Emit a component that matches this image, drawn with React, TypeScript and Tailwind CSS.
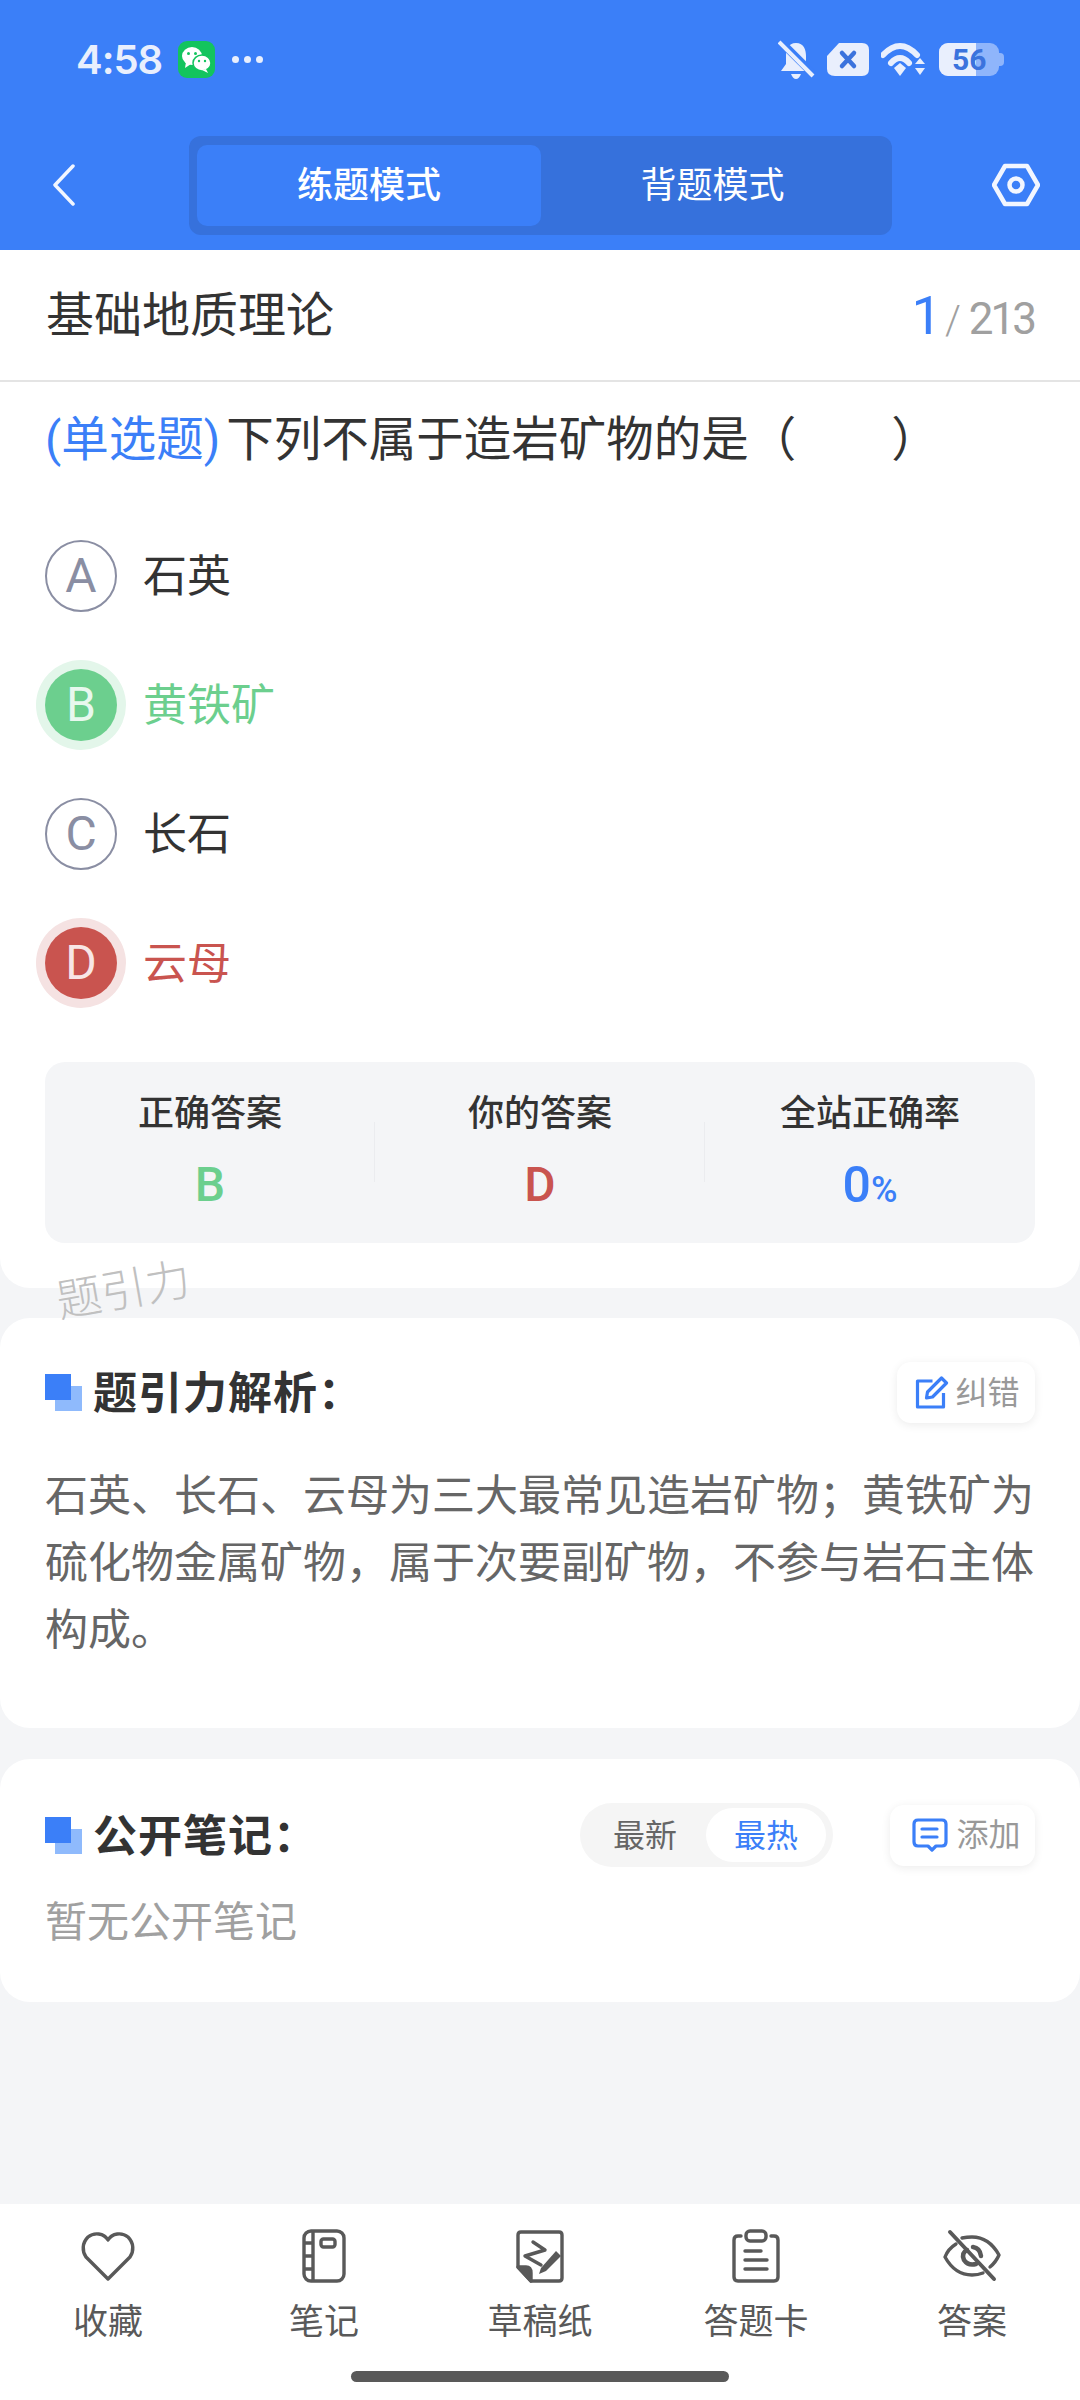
import React from 'react';

const fontStack = "font-['Roboto','Noto_Sans_CJK_SC',sans-serif]";

const HeartIcon = () => (
  <svg width="54" height="54" viewBox="0 0 54 54" fill="none" stroke="#595959" strokeWidth="3.4" strokeLinejoin="round">
    <path d="M27 11 C23 4 13 3 7 8 C1 14 1 22 5 28 L27 50 L49 28 C53 22 53 14 47 8 C41 3 31 4 27 11 Z" />
  </svg>
);

const NotebookIcon = () => (
  <svg width="54" height="54" viewBox="0 0 54 54" fill="none" stroke="#595959" strokeWidth="3.4" strokeLinejoin="round">
    <rect x="7" y="2" width="40" height="50" rx="7" />
    <path d="M16 2 V52 M7 14 H16 M7 27 H16 M7 40 H16" />
    <rect x="24" y="10" width="14" height="8" rx="2.5" />
  </svg>
);

const DraftIcon = () => (
  <svg width="54" height="54" viewBox="0 0 54 54" fill="none" stroke="#595959" strokeWidth="3.4" strokeLinejoin="round" strokeLinecap="round">
    <path d="M5 38 V6 Q5 3 8 3 H46 Q49 3 49 6 V49 Q49 52 46 52 H18 Z" />
    <path d="M5 38 H13 Q18 38 18 44 V52 Z" fill="#595959" />
    <path d="M20 13 L32 21 L12 27 L28 36" />
    <path d="M28 39 L43 22 L48 27 L33 42 L26 45 Z" fill="#595959" stroke="none" />
  </svg>
);

const ClipboardIcon = () => (
  <svg width="54" height="54" viewBox="0 0 54 54" fill="none" stroke="#595959" strokeWidth="3.4" strokeLinecap="round" strokeLinejoin="round">
    <path d="M12 7 H9 Q5 7 5 11 V48 Q5 52 9 52 H45 Q49 52 49 48 V11 Q49 7 45 7 H42" />
    <rect x="17" y="2" width="20" height="10" rx="4" />
    <path d="M16 22 H32 M16 31 H38 M16 40 H38" />
  </svg>
);

const EyeOffIcon = () => (
  <svg width="58" height="54" viewBox="0 0 58 54" fill="none" stroke="#595959" strokeWidth="3.4" strokeLinecap="round" strokeLinejoin="round">
    <path d="M13 15 Q5 20 2 28 Q12 46 29 46 Q35 46 40 44" />
    <path d="M19 9 Q24 8 29 8 Q46 8 56 26 Q53 33 47 38" />
    <path d="M24 21 Q18 24 21 31 Q25 37 33 35" strokeWidth="4.5" />
    <path d="M30 18 Q37 19 38 27" strokeWidth="4.5" />
    <path d="M7 3 L51 50" strokeWidth="4" />
  </svg>
);

const SectionMark = () => (
  <div className="relative w-[37px] h-[37px] shrink-0">
    <div className="absolute left-[10px] top-[12px] w-[27px] h-[25px] bg-[#8fbafc]" />
    <div className="absolute left-0 top-0 w-[26px] h-[26px] bg-[#3b7ff8]" />
  </div>
);

const options = [
  { key: 'A', text: '石英', state: 'plain' },
  { key: 'B', text: '黄铁矿', state: 'right' },
  { key: 'C', text: '长石', state: 'plain' },
  { key: 'D', text: '云母', state: 'wrong' },
];

const tabs = [
  { label: '收藏', icon: <HeartIcon /> },
  { label: '笔记', icon: <NotebookIcon /> },
  { label: '草稿纸', icon: <DraftIcon /> },
  { label: '答题卡', icon: <ClipboardIcon /> },
  { label: '答案', icon: <EyeOffIcon /> },
];

export default function App() {
  return (
    <div className={`relative w-[1080px] h-[2400px] flex flex-col bg-[#f4f5f7] overflow-hidden ${fontStack}`}>
      <header className="h-[250px] bg-[#3b7ff8] flex flex-col shrink-0">
        <div className="h-[136px] pt-[41px] pl-[76px] pr-[76px] flex justify-between items-start">
          <div className="flex items-center h-[37px]">
            <span className="w-[85px] text-[40px] leading-[37px] font-semibold text-[#e9effd] font-['Inter',sans-serif] tracking-[-1px]">4:58</span>
            <div className="ml-[17px] w-[37px] h-[37px] rounded-[9px] bg-[#13c45e] flex items-center justify-center">
              <svg width="31" height="27" viewBox="0 0 31 27" fill="#ffffff">
                <ellipse cx="11" cy="10" rx="10" ry="9" />
                <path d="M5 16 L4 22 L10 18 Z" />
                <ellipse cx="21" cy="17" rx="9" ry="8" stroke="#13c45e" strokeWidth="1.5" />
                <path d="M25 23 L27 27 L21 24 Z" />
                <circle cx="7.5" cy="7.5" r="1.5" fill="#13c45e" />
                <circle cx="14.5" cy="7.5" r="1.5" fill="#13c45e" />
                <circle cx="18" cy="15" r="1.2" fill="#13c45e" />
                <circle cx="24" cy="15" r="1.2" fill="#13c45e" />
              </svg>
            </div>
            <div className="ml-[17px] flex gap-[5px]">
              <span className="w-[7px] h-[7px] rounded-full bg-[#e9effd]" />
              <span className="w-[7px] h-[7px] rounded-full bg-[#e9effd]" />
              <span className="w-[7px] h-[7px] rounded-full bg-[#e9effd]" />
            </div>
          </div>
          <div className="flex items-center gap-[12px] h-[37px]">
            <svg width="37" height="40" viewBox="0 0 37 40" fill="#e9effd">
              <path d="M18 3 C10 3 8 10 8 16 V24 L3 31 H33 L28 24 V16 C28 10 26 3 18 3 Z" />
              <path d="M13 34 H23 Q21 39 18 39 Q15 39 13 34 Z" />
              <path d="M2 1 L36 35" stroke="#3b7ff8" strokeWidth="8" />
              <path d="M1 2 L35 36" stroke="#e9effd" strokeWidth="4" />
            </svg>
            <svg width="42" height="33" viewBox="0 0 42 33">
              <path d="M12 0 H35 Q42 0 42 7 V26 Q42 33 35 33 H8 Q0 33 0 26 V13 Z" fill="#e9effd" />
              <path d="M15 10 L27 23 M27 10 L15 23" stroke="#3b73dd" strokeWidth="4.5" strokeLinecap="round" />
            </svg>
            <svg width="46" height="33" viewBox="0 0 46 33" fill="none">
              <path d="M2 12 Q19 -6 36 12" stroke="#e9effd" strokeWidth="6" strokeLinecap="round" />
              <path d="M10 20 Q19 10 28 20" stroke="#e9effd" strokeWidth="6" strokeLinecap="round" />
              <path d="M13 25 L19 20 L25 25 L19 33 Z" fill="#e9effd" />
              <path d="M34 21 L39 15 L44 21 Z" fill="#e9effd" />
              <path d="M34 25 L44 25 L39 32 Z" fill="#e9effd" />
            </svg>
            <div className="relative w-[65px] h-[33px]">
              <div className="absolute left-0 top-0 w-[60px] h-[33px] rounded-[9px] bg-[#8fb5fb]" />
              <div className="absolute right-0 top-[10px] w-[6px] h-[13px] rounded-r-[4px] bg-[#8fb5fb]" />
              <div className="absolute left-0 top-0 w-[37px] h-[33px] rounded-l-[9px] bg-[#e9effd]" />
              <span className="absolute left-[13px] top-0 text-[30px] leading-[33px] font-bold text-[#3b73dd]">56</span>
            </div>
          </div>
        </div>
        <div className="relative flex items-start justify-center">
          <svg className="absolute left-[52px] top-[28px]" width="23" height="42" viewBox="0 0 23 42" fill="none" stroke="#f2f6ff" strokeWidth="3.5" strokeLinecap="round" strokeLinejoin="round">
            <path d="M21 2 L3 21 L21 40" />
          </svg>
          <div className="w-[703px] h-[99px] ml-[1px] p-[8px] pt-[9px] rounded-[12px] bg-[#3671dc] flex">
            <div className="w-[344px] h-[81px] pt-[1px] rounded-[10px] bg-[#3b7ff8] flex items-center justify-center text-[36px] font-medium text-white">练题模式</div>
            <div className="flex-1 h-[81px] pt-[1px] flex items-center justify-center text-[36px] text-white">背题模式</div>
          </div>
          <svg className="absolute left-[992px] top-[27px]" width="48" height="44" viewBox="0 0 48 44" fill="none" stroke="#f2f6ff" strokeWidth="4.5" strokeLinejoin="round">
            <path d="M13 3 H35 L46 22 L35 41 H13 L2 22 Z" />
            <circle cx="24" cy="22" r="6.5" />
          </svg>
        </div>
      </header>

      <section className="bg-white rounded-b-[30px] pb-[45px] shrink-0">
        <div className="h-[132px] pl-[46px] pr-[46px] flex items-center justify-between border-b-2 border-[#e4e4e4]">
          <span className="text-[48px] text-[#333333] pt-[2px]">基础地质理论</span>
          <div className="flex items-baseline pt-[2px]">
            <span className="text-[54px] leading-none text-[#3b7ff8]">1</span>
            <span className="ml-[3px] text-[40px] leading-none font-light text-[#a0a0a0]">/</span>
            <span className="ml-[8px] text-[44px] leading-none text-[#a0a0a0] tracking-[-3px]">213</span>
          </div>
        </div>
        <div className="mt-[22px] ml-[45px] h-[72px] flex items-center text-[47.5px] leading-[72px] text-[#333333] whitespace-pre">
          <span className="text-[#3b7ff8] mr-[6px]">(单选题)</span>下列不属于造岩矿物的是（　　）
        </div>
        <div className="mt-[35px] flex flex-col">
          {options.map(opt => (
            <div key={opt.key} className="h-[129px] pl-[45px] flex items-center">
              {opt.state === 'plain' && (
                <div className="w-[72px] h-[72px] rounded-full border-2 border-[#8a8ea3] flex items-center justify-center text-[48px] text-[#8a8ea3]">{opt.key}</div>
              )}
              {opt.state === 'right' && (
                <div className="w-[72px] h-[72px] rounded-full bg-[#6ccf8e] ring-[9px] ring-[#e3f6ea] flex items-center justify-center text-[48px] text-[#e8f8ee]">{opt.key}</div>
              )}
              {opt.state === 'wrong' && (
                <div className="w-[72px] h-[72px] rounded-full bg-[#c9544f] ring-[9px] ring-[#f5e2e2] flex items-center justify-center text-[48px] text-[#f8e6e6]">{opt.key}</div>
              )}
              <span className={`ml-[26px] pt-[2px] text-[44px] ${opt.state === 'right' ? 'text-[#6ccf8e]' : opt.state === 'wrong' ? 'text-[#c9544f]' : 'text-[#333333]'}`}>{opt.text}</span>
            </div>
          ))}
        </div>
        <div className="mt-[35px] mx-[45px] h-[181px] rounded-[20px] bg-[#f4f5f7] grid grid-cols-3">
          <div className="flex flex-col items-center pt-[28px] relative">
            <span className="text-[36px] leading-[48px] font-medium text-[#333333]">正确答案</span>
            <span className="mt-[23px] text-[48px] leading-[48px] font-medium text-[#6ccf8e]">B</span>
            <div className="absolute right-0 top-[60px] w-[1px] h-[60px] bg-[#ebecef]" />
          </div>
          <div className="flex flex-col items-center pt-[28px] relative">
            <span className="text-[36px] leading-[48px] font-medium text-[#333333]">你的答案</span>
            <span className="mt-[23px] text-[48px] leading-[48px] font-medium text-[#c9544f]">D</span>
            <div className="absolute right-0 top-[60px] w-[1px] h-[60px] bg-[#ebecef]" />
          </div>
          <div className="flex flex-col items-center pt-[28px]">
            <span className="text-[36px] leading-[48px] font-medium text-[#333333]">全站正确率</span>
            <span className="mt-[23px] text-[50px] leading-[48px] font-medium text-[#3b7ff8]">0<span className="text-[36px]">%</span></span>
          </div>
        </div>
      </section>

      <section className="mt-[30px] bg-white rounded-[30px] px-[45px] pt-[44px] pb-[64px] shrink-0">
        <div className="h-[61px] flex items-center justify-between">
          <div className="flex items-center">
            <SectionMark />
            <span className="ml-[11px] pt-[3px] text-[44px] font-bold text-[#333333] tracking-[1px]">题引力解析：</span>
          </div>
          <div className="w-[138px] h-[61px] rounded-[14px] bg-white shadow-[0_2px_10px_rgba(0,0,0,0.08)] flex items-center justify-center gap-[6px] pl-[3px]">
            <svg width="34" height="33" viewBox="0 0 33 33" fill="none" stroke="#3b7ff8" strokeWidth="3.2" strokeLinejoin="round">
              <path d="M17 5 H2 V31 H28 V17" />
              <path d="M26 2 L31 7 L17 21 L11 22 L12 16 Z" />
            </svg>
            <span className="text-[32px] text-[#999999]">纠错</span>
          </div>
        </div>
        <p className="mt-[40px] text-[43px] leading-[67px] text-[#666666]">石英、长石、云母为三大最常见造岩矿物；黄铁矿为硫化物金属矿物，属于次要副矿物，不参与岩石主体构成。</p>
      </section>

      <section className="mt-[31px] bg-white rounded-[30px] px-[45px] pt-[44px] pb-[49px] shrink-0">
        <div className="h-[64px] flex items-center">
          <SectionMark />
          <span className="ml-[11px] pt-[3px] text-[44px] font-bold text-[#333333] tracking-[1px]">公开笔记：</span>
          <div className="ml-auto w-[253px] h-[64px] rounded-full bg-[#f5f5f5] flex items-center pl-[33px] pr-[7px]">
            <span className="pt-[1px] text-[32px] text-[#666666]">最新</span>
            <span className="ml-auto w-[120px] h-[54px] pt-[1px] rounded-full bg-white flex items-center justify-center text-[32px] text-[#3b7ff8]">最热</span>
          </div>
          <div className="ml-[57px] w-[145px] h-[61px] pl-[8px] rounded-[14px] bg-white shadow-[0_2px_10px_rgba(0,0,0,0.08)] flex items-center justify-center gap-[8px]">
            <svg width="36" height="34" viewBox="0 0 36 34" fill="none" stroke="#3b7ff8" strokeWidth="3.2" strokeLinejoin="round" strokeLinecap="round">
              <path d="M6 2 H30 Q34 2 34 6 V24 Q34 28 30 28 H24 L20 32 L16 28 H6 Q2 28 2 24 V6 Q2 2 6 2 Z" />
              <path d="M10 11 H25 M10 19 H25" />
            </svg>
            <span className="text-[32px] text-[#999999]">添加</span>
          </div>
        </div>
        <p className="mt-[26px] text-[42px] leading-[60px] text-[#a0a0a0]">暂无公开笔记</p>
      </section>

      <div className="flex-1" />

      <nav className="bg-white pt-[25px] h-[196px] shrink-0 flex flex-col">
        <div className="grid grid-cols-5">
          {tabs.map(tab => (
            <div key={tab.label} className="flex flex-col items-center">
              <div className="h-[54px] flex items-center justify-center">{tab.icon}</div>
              <span className="mt-[16px] text-[35px] leading-[48px] text-[#595959]">{tab.label}</span>
            </div>
          ))}
        </div>
        <div className="mt-[24px] mx-auto w-[378px] h-[11px] rounded-full bg-[#595959]" />
      </nav>

      <span className="absolute left-[56px] top-[1264px] text-[45px] leading-[54px] font-light text-[#c0c0c0] -rotate-[10deg]">题引力</span>
    </div>
  );
}
